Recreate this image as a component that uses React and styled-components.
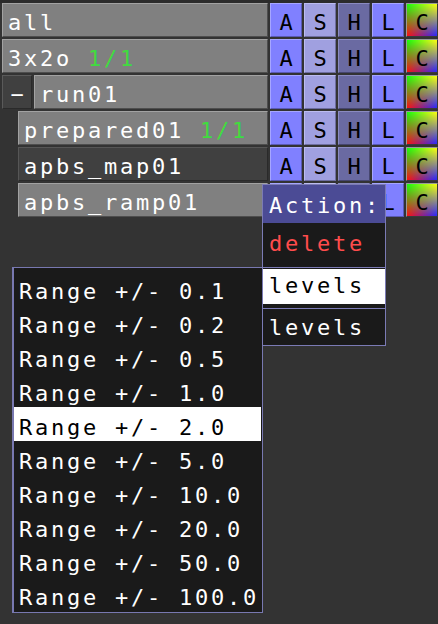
import React from 'react';
import styled, { createGlobalStyle, css } from 'styled-components';

const Global = createGlobalStyle`
  html, body { margin: 0; padding: 0; background: #333333; }
  body { width: 438px; height: 624px; overflow: hidden; font-family: "DejaVu Sans Mono", "Liberation Mono", monospace; }
`;

const Panel = styled.div`
  position: relative;
  box-sizing: border-box;
  width: 438px;
  height: 624px;
  background: #333333;
  border-top: 3px solid #2b2b2b;
  display: flex;
  flex-direction: column;
  gap: 2px;
`;

const Row = styled.div`
  display: flex;
  gap: 2px;
  height: 34px;
  padding-left: ${(p) => p.$indent}px;
`;

const bevel = (fill, light, dark) => css`
  background: ${fill};
  border: 1px solid;
  border-color: ${light} ${dark} ${dark} ${light};
`;

const textBase = css`
  font-family: "DejaVu Sans Mono", "Liberation Mono", monospace;
  font-size: 22px;
  white-space: pre;
`;

const Btn = styled.div`
  ${textBase}
  box-sizing: border-box;
  height: 34px;
  padding-top: 5px;
  line-height: 27px;
`;

const NameBtn = styled(Btn)`
  flex: 1;
  min-width: 0;
  padding-left: 5px;
  color: #ffffff;
  letter-spacing: 2.76px;
  ${(p) => (p.$off ? bevel('#404040', '#565656', '#2a2a2a') : bevel('#808080', '#a2a2a2', '#4e4e4e'))}
`;

const Count = styled.span`
  color: #3fdc3f;
`;

const Collapse = styled(Btn)`
  width: 30px;
  text-align: center;
  color: #ffffff;
  ${bevel('#404040', '#5a5a5a', '#2a2a2a')}
`;

const toggleColors = {
  A: ['#8080ff', '#a6a6ff', '#5a5ab4'],
  S: ['#a0a0e0', '#bcbcf0', '#6e6ea0'],
  H: ['#6a6aa2', '#8a8ac0', '#46466e'],
  L: ['#8080ff', '#a6a6ff', '#5a5ab4'],
};

const Toggle = styled(Btn)`
  width: 32px;
  flex: none;
  text-align: center;
  color: #000000;
  ${(p) => bevel(...toggleColors[p.$k])}
`;

const ColorBtn = styled(Btn)`
  position: relative;
  width: 32px;
  flex: none;
  text-align: center;
  color: #000000;
  border: 1px solid;
  border-color: #9a9a9a #3a3a3a #3a3a3a #9a9a9a;
  background: linear-gradient(to right, #ff1010, #2828ff);
  &::before {
    content: '';
    position: absolute;
    inset: 0;
    background: linear-gradient(to right, #10ff10, #ffff10);
    -webkit-mask-image: linear-gradient(to bottom, #000 0%, transparent 100%);
    mask-image: linear-gradient(to bottom, #000 0%, transparent 100%);
  }
`;

const ColorLetter = styled.span`
  position: relative;
`;

/* Action popup */
const ActionMenu = styled.div`
  position: absolute;
  left: 262px;
  top: 181px;
  width: 124px;
  box-sizing: border-box;
  border: 1px solid #7b7bb5;
  background: #1a1a1a;
  display: flex;
  flex-direction: column;
  z-index: 3;
`;

const MenuItem = styled.div`
  ${textBase}
  box-sizing: border-box;
  height: ${(p) => p.$h}px;
  padding-top: ${(p) => p.$pt}px;
  padding-left: 6px;
  line-height: 26px;
  letter-spacing: 2.76px;
  color: ${(p) => p.$color || '#ffffff'};
  background: ${(p) => p.$bg || '#1a1a1a'};
`;

const Separator = styled.div`
  height: 1px;
  background: #7b7bb5;
`;

const Gap = styled.div`
  height: ${(p) => p.$h}px;
  background: #1a1a1a;
`;

/* Range popup */
const RangeMenu = styled.div`
  position: absolute;
  left: 12px;
  top: 264px;
  width: 251px;
  height: 346px;
  box-sizing: border-box;
  border: 1px solid #7878b0;
  border-left-width: 2px;
  background: #1a1a1a;
  padding: 3px 1px 1px 0;
  display: flex;
  flex-direction: column;
  z-index: 2;
`;

const RangeItem = styled.div`
  ${textBase}
  box-sizing: border-box;
  height: 34px;
  padding-top: 8px;
  padding-left: 5px;
  line-height: 26px;
  letter-spacing: 2.76px;
  color: ${(p) => (p.$active ? '#000000' : '#ffffff')};
  background: ${(p) => (p.$active ? '#ffffff' : 'transparent')};
`;

const rows = [
  { name: 'all', indent: 2 },
  { name: '3x2o', count: '1/1', indent: 2 },
  { name: 'run01', indent: 2, collapse: true },
  { name: 'prepared01', count: '1/1', indent: 18 },
  { name: 'apbs_map01', indent: 18, off: true },
  { name: 'apbs_ramp01', indent: 18, covered: ['A', 'S', 'H'] },
];

const ranges = ['0.1', '0.2', '0.5', '1.0', '2.0', '5.0', '10.0', '20.0', '50.0', '100.0'];

export default function App() {
  return (
    <>
      <Global />
      <Panel>
        {rows.map((r) => (
          <Row key={r.name} $indent={r.indent}>
            {r.collapse && <Collapse>−</Collapse>}
            <NameBtn $off={r.off}>
              {r.name}
              {r.count && (
                <>
                  {' '}
                  <Count>{r.count}</Count>
                </>
              )}
            </NameBtn>
            {['A', 'S', 'H', 'L'].map((k) => (
              <Toggle key={k} $k={k}>
                {r.covered && r.covered.includes(k) ? '' : k}
              </Toggle>
            ))}
            <ColorBtn>
              <ColorLetter>C</ColorLetter>
            </ColorBtn>
          </Row>
        ))}

        <ActionMenu>
          <MenuItem $h={38} $pt={8} $bg="#4b4b95">Action:</MenuItem>
          <MenuItem $h={44} $pt={8} $color="#ff4c4c">delete</MenuItem>
          <Separator />
          <Gap $h={1} />
          <MenuItem $h={35} $pt={4} $bg="#ffffff" $color="#000000">levels</MenuItem>
          <Gap $h={4} />
          <Separator />
          <Gap $h={1} />
          <MenuItem $h={35} $pt={5}>levels</MenuItem>
        </ActionMenu>

        <RangeMenu>
          {ranges.map((v) => (
            <RangeItem key={v} $active={v === '2.0'}>
              {`Range +/- ${v}`}
            </RangeItem>
          ))}
        </RangeMenu>
      </Panel>
    </>
  );
}
